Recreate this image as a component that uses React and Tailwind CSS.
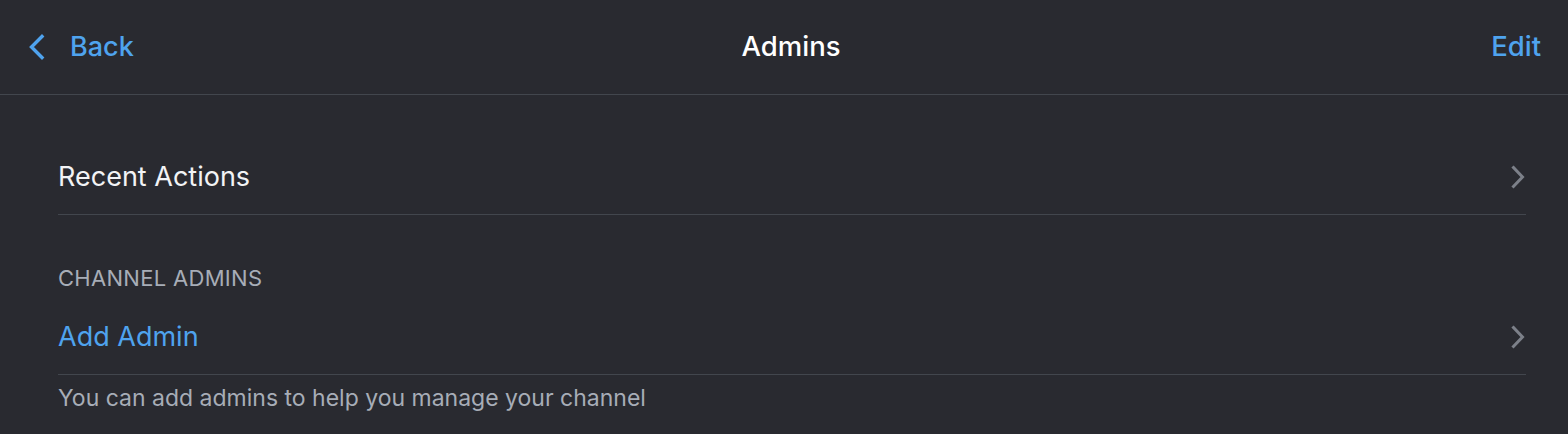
import React from 'react';

const ChevronRight = () => (
  <svg width="16" height="24" viewBox="0 0 16 24" fill="none" className="shrink-0">
    <path d="M3.5 2.5 L12.5 12 L3.5 21.5" stroke="#7c8089" strokeWidth="3" strokeLinecap="square" strokeLinejoin="miter" />
  </svg>
);

const ChevronLeft = () => (
  <svg width="18" height="26" viewBox="0 0 18 26" fill="none" className="shrink-0">
    <path d="M14 2.5 L3.5 13 L14 23.5" stroke="#4fa3ee" strokeWidth="3.4" strokeLinecap="square" strokeLinejoin="miter" />
  </svg>
);

const Row = ({ label, blue }) => (
  <div className="h-[76px] flex items-center justify-between border-b border-[#42464d]">
    <span className={`text-[27px] pt-[2px] ${blue ? 'text-[#4fa3ee]' : 'text-[#f2f3f5]'}`}>{label}</span>
    <ChevronRight />
  </div>
);

export default function App() {
  return (
    <div className="w-[1568px] h-[434px] bg-[#292a30] overflow-hidden" style={{ fontFamily: 'Inter, "Noto Sans", sans-serif' }}>
      <header className="h-[95px] flex items-center justify-between pl-[28px] pr-[27px] border-b border-[#42464d] relative">
        <div className="flex items-center gap-[24px] text-[#4fa3ee]">
          <ChevronLeft />
          <span className="text-[27px] font-medium">Back</span>
        </div>
        <h1 className="absolute left-[791px] -translate-x-1/2 text-[27.5px] font-medium text-white">Admins</h1>
        <span className="text-[27.5px] font-medium text-[#4fa3ee]">Edit</span>
      </header>
      <main className="pl-[58px] pr-[42px] pt-[44px]">
        <Row label="Recent Actions" />
        <div className="h-[84px] flex items-end pb-[4px]">
          <span className="text-[22px] text-[#a7adb7] tracking-[0.3px]">CHANNEL ADMINS</span>
        </div>
        <Row label="Add Admin" blue />
        <p className="pt-[6px] text-[23px] text-[#a7adb7]">You can add admins to help you manage your channel</p>
      </main>
    </div>
  );
}
